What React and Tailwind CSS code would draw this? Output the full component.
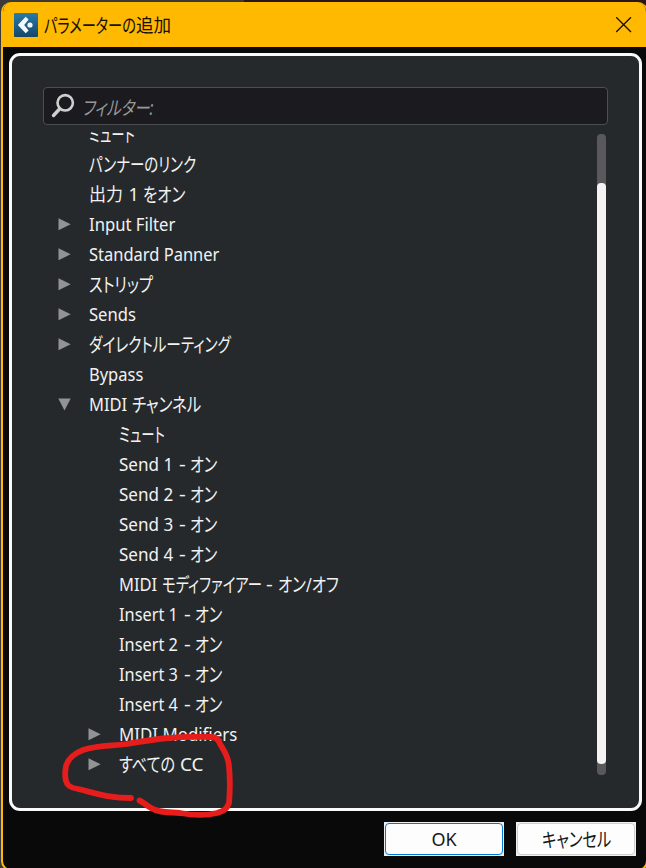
import { useLayoutEffect, useRef } from 'react';

// A run of text condensed or expanded horizontally to a given width.
function Run({ text, width, gap = 0 }) {
  const ref = useRef(null);
  const kana = /[\u3040-\u30ff]/.test(text);
  useLayoutEffect(() => {
    const el = ref.current;
    el.style.transform = `scaleX(${width / el.offsetWidth})`;
  }, [text, width]);
  return (
    <span className="block h-[30px] shrink-0" style={{ width, marginLeft: gap }}>
      <span ref={ref} className={`block w-max origin-left whitespace-pre ${kana ? 'text-[19.5px] leading-[31px]' : ''}`}>{text}</span>
    </span>
  );
}

function Label({ runs }) {
  return (
    <span className="flex">
      {runs.map(([text, width, gap], i) => (
        <Run key={i} text={text} width={width} gap={gap} />
      ))}
    </span>
  );
}

function Arrow({ open }) {
  return (
    <svg width="13" height="13" viewBox="0 0 13 13" fill="#929395">
      {open ? <path d="M0.3 0.5H12.7L6.5 12.5Z" /> : <path d="M0.5 0.3V12.3L12.7 6.3Z" />}
    </svg>
  );
}

const dash = ['-', 7, 6];
const on = ['オン', 27, 4];
const rows = [
  { runs: [['ミュート', 46]] },
  { runs: [['パンナーのリンク', 107]] },
  { runs: [['出力', 34, 0], ['1', 10, 6], ['をオン', 42, 4]] },
  { arrow: 'closed', runs: [['Input Filter', 86]] },
  { arrow: 'closed', runs: [['Standard Panner', 130]] },
  { arrow: 'closed', runs: [['ストリップ', 64]] },
  { arrow: 'closed', runs: [['Sends', 47]] },
  { arrow: 'closed', runs: [['ダイレクトルーティング', 142]] },
  { runs: [['Bypass', 54]] },
  { arrow: 'open', runs: [['MIDI', 38.5], ['チャンネル', 69, 5]] },
  { deep: true, runs: [['ミュート', 46]] },
  { deep: true, runs: [['Send 1', 54], dash, on] },
  { deep: true, runs: [['Send 2', 54], dash, on] },
  { deep: true, runs: [['Send 3', 54], dash, on] },
  { deep: true, runs: [['Send 4', 54], dash, on] },
  { deep: true, runs: [['MIDI', 38.5], ['モディファイアー', 100, 5], ['-', 7, 4], ['オン/オフ', 61, 5]] },
  { deep: true, runs: [['Insert 1', 59], dash, on] },
  { deep: true, runs: [['Insert 2', 59], dash, on] },
  { deep: true, runs: [['Insert 3', 59], dash, on] },
  { deep: true, runs: [['Insert 4', 59], dash, on] },
  { deep: true, arrow: 'closed', runs: [['MIDI Modifiers', 118]] },
  { deep: true, arrow: 'closed', runs: [['すべての', 56], ['CC', 23, 5]] },
];

function Row({ arrow, deep, runs }) {
  return (
    <div className={`flex h-[30px] items-center ${deep ? 'pl-[45px]' : 'pl-[15px]'}`}>
      <span className="w-[30.5px] shrink-0">{arrow && <Arrow open={arrow === 'open'} />}</span>
      <Label runs={runs} />
    </div>
  );
}

export default function App() {
  return (
    <div className="relative h-[868px] w-[646px] overflow-hidden bg-[#39393a] pl-px pt-[2px] font-['Noto_Sans','Noto_Sans_CJK_JP',sans-serif] text-[18px] leading-[30px] text-[#f2f2f2] [font-feature-settings:'palt']">
      <div className="absolute left-[244px] right-0 top-0 h-5 bg-[#271719]" />
      <div className="relative flex h-[869px] w-[647px] flex-col overflow-hidden rounded-[10px] border-2 border-t-0 border-[#ffb900] bg-[#090909]">
        <header className="flex h-[45px] shrink-0 items-center bg-[#ffb900] pl-[11px] text-[#171000]">
          <svg width="24" height="24" viewBox="0 0 24 24">
            <defs>
              <linearGradient id="logo" x1="0" y1="0" x2="0" y2="1">
                <stop stopColor="#287ba8" />
                <stop offset="1" stopColor="#144669" />
              </linearGradient>
            </defs>
            <rect width="24" height="24" rx="1" fill="url(#logo)" />
            <path d="M3.8 12L11.7 3.7L14.6 6.6L10.2 12L14.6 17.4L11.7 20.3Z" fill="#f4f8fb" />
            <circle cx="16" cy="12" r="2.6" fill="#f4f8fb" />
          </svg>
          <div className="ml-[6px]"><Label runs={[['パラメーターの', 92], ['追加', 35, 0]]} /></div>
          <svg className="ml-auto mr-[14px]" width="16" height="16" viewBox="0 0 16 16" stroke="#171000" strokeWidth="1.3">
            <path d="M0.2 0.2L15 15M15 0.2L0.2 15" />
          </svg>
        </header>
        <main className="ml-[6px] mt-[6px] flex h-[758px] w-[633px] shrink-0 flex-col rounded-[11px] border-[3px] border-[#fafafa] bg-[#25292c] pl-[31px] pr-[31px] pt-[31px]">
          <div className="flex h-[38px] w-[565px] shrink-0 items-center rounded-[4px] border border-[#4d4e51] bg-[#1b1b1f] pl-[7px] text-[#98989b]">
            <svg width="24" height="26" viewBox="0 0 24 26" fill="none" stroke="#cfcfd0">
              <circle cx="14.2" cy="9.8" r="7.7" strokeWidth="2.6" />
              <path d="M8.500 16L2.500 22.500" strokeWidth="3.4" strokeLinecap="round" />
            </svg>
            <div className="ml-[7px] mt-px italic"><Label runs={[['フィルター:', 71]]} /></div>
          </div>
          <div className="mt-[7px] flex h-[643px] shrink-0 overflow-hidden">
            <div className="-mt-[13px] w-[554px]">
              {rows.map((row, i) => <Row key={i} {...row} />)}
            </div>
            <div className="mt-[2px] h-[641px] w-[9px] rounded-[4px] bg-[#59595c] pt-[49px]">
              <div className="h-[581px] rounded-[4px] bg-[#f3f3f3]" />
            </div>
          </div>
        </main>
        <footer className="mt-[11px] flex gap-3 pl-[381px] text-[#171717]">
          <div className="h-[34px] w-[120px] bg-[#f0f0f0] p-px">
            <div className="flex h-full items-center justify-center rounded-[4px] border border-[#0078d4] bg-[#fdfdfd]"><Label runs={[['OK', 25]]} /></div>
          </div>
          <div className="h-[34px] w-[120px] bg-[#f0f0f0] p-px">
            <div className="flex h-full items-center justify-center rounded-[4px] border border-[#cfcfcf] bg-[#fdfdfd]"><Label runs={[['キャンセル', 69]]} /></div>
          </div>
        </footer>
      </div>
      <svg className="absolute left-0 top-0" width="646" height="868" viewBox="0 0 646 868" fill="none" stroke="#e71d1c" strokeWidth="5.8" strokeLinecap="round" strokeLinejoin="round">
        <path d="M131 798C108 798 95 793 78 789C71 788 67 786 66 781C65 777 65 771 66 766C68 759 75 753 83 750C97 745 112 746 127 744C145 741 154 739 169 738C186 736 199 737 211 737C217 737 219 740 220 744C225 752 228 757 229 766C230 777 230 792 229 803C227 809 224 811 217 813C205 816 191 815 180 813C169 812 159 813 151 808C147 806 143 802 139.500 800.500" />
      </svg>
    </div>
  );
}
